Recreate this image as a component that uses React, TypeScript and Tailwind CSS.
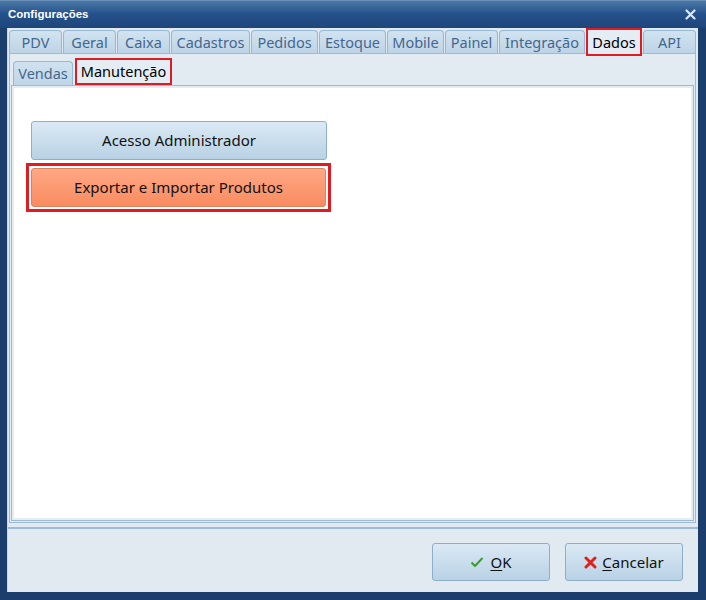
import type { ReactNode } from "react";

const tabs = [
  { label: "PDV", w: "w-[53px]" },
  { label: "Geral", w: "w-[53px]" },
  { label: "Caixa", w: "w-[53px]" },
  { label: "Cadastros", w: "w-[79px]" },
  { label: "Pedidos", w: "w-[67px]" },
  { label: "Estoque", w: "w-[67px]" },
  { label: "Mobile", w: "w-[57px]" },
  { label: "Painel", w: "w-[53px]" },
  { label: "Integração", w: "w-[86px]" },
  { label: "Dados", w: "w-[56px]", active: true },
  { label: "API", w: "w-[53px]" },
];

function Tab({ label, w, active }: { label: string; w: string; active?: boolean }) {
  if (active) {
    return (
      <div className={`${w} h-[28px] -mt-[2px] relative z-10 border-2 border-[#e11b22] bg-[#e4ecf4] flex items-center justify-center text-black`}>
        {label}
      </div>
    );
  }
  return (
    <div
      className={`${w} h-[23px] rounded-t-[4px] border border-b-0 border-[#97b8d4] bg-gradient-to-b from-[#d2e3f0] to-[#bdd4e6] flex items-center justify-center text-[#44678e]`}
    >
      {label}
    </div>
  );
}

function BlueButton({ children, className = "" }: { children: ReactNode; className?: string }) {
  return (
    <button
      type="button"
      className={`rounded-[3px] border border-[#8dafcc] bg-gradient-to-b from-[#dbe9f4] to-[#b8d2e5] text-[#111] text-[15px] flex items-center justify-center ${className}`}
    >
      {children}
    </button>
  );
}

export default function App() {
  return (
    <div
      className="w-[706px] h-[600px] bg-[#1c3e6c] flex flex-col select-none"
      style={{ fontFamily: '"Noto Sans", "Open Sans", sans-serif' }}
    >
      {/* Title bar */}
      <div className="h-[28px] shrink-0 bg-gradient-to-b from-[#4a78a6] via-[#24508a] to-[#1e467b] flex items-center justify-between pl-[8px] pr-[10px] border-t border-[#6b90b8]">
        <span className="text-white font-bold text-[11.5px]" style={{ fontFamily: '"Liberation Sans", Arial, sans-serif' }}>
          Configurações
        </span>
        <svg width="11" height="11" viewBox="0 0 11 11">
          <path d="M1.5 1.5 L9.5 9.5 M9.5 1.5 L1.5 9.5" stroke="#dfe8f2" strokeWidth="2.2" strokeLinecap="round" />
        </svg>
      </div>

      {/* Body */}
      <div className="flex-1 ml-[7px] mb-[8px] mr-[8px] bg-[#e1e9f1] border-l border-[#c7d6e5] flex flex-col">
        {/* main tabs */}
        <div className="h-[25px] shrink-0 flex items-start gap-[1px] pl-[1px] pt-[2px] text-[14.5px] leading-none">
          {tabs.map((t) => (
            <Tab key={t.label} {...t} />
          ))}
        </div>

        {/* tab page */}
        <div className="h-[470px] shrink-0 ml-[1px] mr-[2px] border border-[#9dbbd6] bg-[#e2eaf2] flex flex-col">
          <div className="h-[31px] shrink-0 flex items-end gap-[1px] pl-[3px] text-[14.5px] leading-none">
            <div className="w-[60px] h-[24px] rounded-t-[4px] border border-b-0 border-[#97b8d4] bg-gradient-to-b from-[#d0e2ef] to-[#bfd5e7] flex items-center justify-center text-[#44678e]">
              Vendas
            </div>
            <div className="w-[97px] h-[27px] self-start mt-[4px] ml-[1px] relative z-10 border-2 border-[#e11b22] bg-[#e4ecf4] flex items-center justify-center text-black">
              Manutenção
            </div>
          </div>
          <div className="flex-1 mx-[1px] mb-[1px] border border-[#9dbbd6] bg-[#e5edf4] p-[2px]">
            <div className="h-full bg-white flex flex-col pl-[17px] pt-[33px]">
              <BlueButton className="w-[296px] h-[39px]">Acesso Administrador</BlueButton>
              <div className="mt-[3px] -ml-[5px] w-[305px] h-[49px] border-[3px] border-[#e11b22] p-[2px]">
                <button
                  type="button"
                  className="w-full h-full rounded-[3px] border border-[#d98460] bg-gradient-to-b from-[#ffa884] to-[#f98b60] text-[#111] text-[15px] flex items-center justify-center"
                >
                  Exportar e Importar Produtos
                </button>
              </div>
            </div>
          </div>
        </div>

        {/* bottom bar */}
        <div className="mt-[4px] border-t-2 border-[#9dbbd6] flex-1 flex items-start justify-end gap-[15px] pt-[14px] pr-[15px]">
          <BlueButton className="w-[118px] h-[38px] gap-[6px]">
            <svg width="14" height="12" viewBox="0 0 14 12">
              <path d="M1.5 6.5 L5 10 L12.5 2" stroke="#3c9e2a" strokeWidth="2" fill="none" strokeLinejoin="round" />
            </svg>
            <span>
              <span className="underline underline-offset-2">O</span>K
            </span>
          </BlueButton>
          <BlueButton className="w-[118px] h-[38px] gap-[5px]">
            <svg width="13" height="13" viewBox="0 0 13 13">
              <path d="M2 2 L11 11 M11 2 L2 11" stroke="#e0201c" strokeWidth="3" strokeLinecap="round" />
            </svg>
            <span>
              <span className="underline underline-offset-2">C</span>ancelar
            </span>
          </BlueButton>
        </div>
      </div>
    </div>
  );
}
